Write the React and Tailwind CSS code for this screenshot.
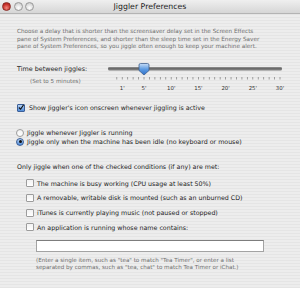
import React from "react";

const ticks = Array.from({ length: 31 }, (_, i) => 10.8 + i * 5.44);

const labels = [
  { text: "1'", x: 16.2 },
  { text: "5'", x: 38 },
  { text: "10'", x: 65.2 },
  { text: "15'", x: 92.4 },
  { text: "20'", x: 119.6 },
  { text: "25'", x: 146.8 },
  { text: "30'", x: 174 },
];

const conditions = [
  "The machine is busy working (CPU usage at least 50%)",
  "A removable, writable disk is mounted (such as an unburned CD)",
  "iTunes is currently playing music (not paused or stopped)",
  "An application is running whose name contains:",
];

function Light({ red }) {
  return (
    <span
      className={
        red
          ? "w-[9px] h-[9px] rounded-full border border-[#8c2a24] bg-[radial-gradient(circle_at_50%_70%,#f08a7e,#c8302a_60%,#9e1f1a)]"
          : "w-[9px] h-[9px] rounded-full border border-[#9a9a9a] bg-[radial-gradient(circle_at_50%_70%,#ffffff,#dcdcdc_60%,#bdbdbd)]"
      }
    />
  );
}

function Box({ checked }) {
  return checked ? (
    <span className="w-[8px] h-[8px] shrink-0 rounded-[1px] border border-[#3b5f98] bg-[linear-gradient(#b7d3f5,#4f8bd8)] flex items-center justify-center">
      <svg width="7" height="7" viewBox="0 0 7 7">
        <path d="M1 3.5 L3 5.5 L6.5 0.5" stroke="#111" strokeWidth="1.3" fill="none" />
      </svg>
    </span>
  ) : (
    <span className="w-[8px] h-[8px] shrink-0 rounded-[1px] border border-[#9c9c9c] bg-[linear-gradient(#f2f2f2,#ffffff)]" />
  );
}

function Radio({ on }) {
  return on ? (
    <span className="w-[8px] h-[8px] shrink-0 rounded-full border border-[#3b5f98] bg-[linear-gradient(#b7d3f5,#4f8bd8)] flex items-center justify-center">
      <span className="w-[3px] h-[3px] rounded-full bg-[#111]" />
    </span>
  ) : (
    <span className="w-[8px] h-[8px] shrink-0 rounded-full border border-[#9c9c9c] bg-[linear-gradient(#f2f2f2,#ffffff)]" />
  );
}

export default function App() {
  return (
    <div className="w-[300px] h-[288px] overflow-hidden font-['DejaVu_Sans',sans-serif] text-[#1c1c1c] bg-[repeating-linear-gradient(to_bottom,#ededed_0px,#ededed_2px,#e5e5e5_2px,#e5e5e5_3px)]">
      {/* Title bar */}
      <div className="h-[14px] flex items-center border-b border-[#b4b4b4] bg-[linear-gradient(#efefef,#d6d6d6)]">
        <div className="w-[40px] flex items-center gap-[2.5px] pl-[2px]">
          <Light red />
          <Light />
          <Light />
        </div>
        <div className="flex-1 text-center text-[7.8px] leading-[14px] text-[#222]">
          Jiggler Preferences
        </div>
        <div className="w-[40px]" />
      </div>

      <div className="pl-[17px] pr-[8px]">
        {/* Description */}
        <div className="mt-[14px] text-[5.7px] leading-[7.5px] text-[#6e6e6e] whitespace-nowrap">
          <div>Choose a delay that is shorter than the screensaver delay set in the Screen Effects</div>
          <div>pane of System Preferences, and shorter than the sleep time set in the Energy Saver</div>
          <div>pane of System Preferences, so you jiggle often enough to keep your machine alert.</div>
        </div>

        {/* Slider */}
        <div className="mt-[12px] flex h-[30px]">
          <div className="w-[89px] shrink-0">
            <div className="pt-[2.5px] text-[6.4px] leading-[9px]">Time between jiggles:</div>
            <div className="mt-[4px] pl-[13px] text-[5.6px] leading-[7px] text-[#6e6e6e]">
              (Set to 5 minutes)
            </div>
          </div>
          <div className="relative w-[182px] h-[30px]">
            <svg width="182" height="30" className="absolute left-0 top-0">
              <rect x="2" y="4.5" width="174" height="3" rx="1.5" fill="#7a7a7a" />
              <rect x="2" y="4.5" width="174" height="1" rx="0.5" fill="#5a5a5a" />
              {ticks.map((x, i) => (
                <rect key={i} x={x - 0.4} y="14" width="0.8" height="2.5" fill="#8a8a8a" />
              ))}
              <defs>
                <linearGradient id="thumb" x1="0" y1="0" x2="0" y2="1">
                  <stop offset="0" stopColor="#c7ddf7" />
                  <stop offset="0.5" stopColor="#5d9be2" />
                  <stop offset="1" stopColor="#2e6fc9" />
                </linearGradient>
              </defs>
              <path
                d="M33 2 Q33 0.5 34.5 0.5 L41.5 0.5 Q43 0.5 43 2 L43 7.5 L38 12 L33 7.5 Z"
                fill="url(#thumb)"
                stroke="#3f5f8e"
                strokeWidth="0.8"
              />
            </svg>
            {labels.map((l) => (
              <span
                key={l.text}
                className="absolute top-[22px] -translate-x-1/2 text-[5.4px] leading-[7px] text-[#333]"
                style={{ left: l.x }}
              >
                {l.text}
              </span>
            ))}
          </div>
        </div>

        {/* Show icon */}
        <div className="mt-[10.5px] flex items-center gap-[4px] h-[9px] text-[6.3px] leading-[9px]">
          <Box checked />
          <span>Show Jiggler's icon onscreen whenever jiggling is active</span>
        </div>

        {/* Radios */}
        <div className="mt-[16px] flex flex-col text-[6.3px] leading-[9px]">
          <div className="flex items-center gap-[3px] -ml-[1px] h-[9px]">
            <Radio />
            <span>Jiggle whenever Jiggler is running</span>
          </div>
          <div className="flex items-center gap-[3px] -ml-[1px] h-[9px]">
            <Radio on />
            <span>Jiggle only when the machine has been idle (no keyboard or mouse)</span>
          </div>
        </div>

        {/* Conditions */}
        <div className="mt-[16px] h-[9px] text-[6.3px] leading-[9px]">
          Only jiggle when one of the checked conditions (if any) are met:
        </div>
        <div className="mt-[5px] pl-[9px] flex flex-col text-[6.3px] leading-[9px]">
          {conditions.map((c) => (
            <div key={c} className="flex items-center gap-[3px] h-[14.67px]">
              <Box />
              <span>{c}</span>
            </div>
          ))}
        </div>

        <div className="mt-[5.7px] ml-[19px] w-[228px] h-[12px] bg-white border border-[#a3a3a3] border-t-[#7d7d7d]" />

        <div className="mt-[4.5px] ml-[19px] text-[5.6px] leading-[7px] text-[#6e6e6e] whitespace-nowrap">
          <div>(Enter a single item, such as "tea" to match "Tea Timer", or enter a list</div>
          <div>separated by commas, such as "tea, chat" to match Tea Timer or iChat.)</div>
        </div>
      </div>
    </div>
  );
}
